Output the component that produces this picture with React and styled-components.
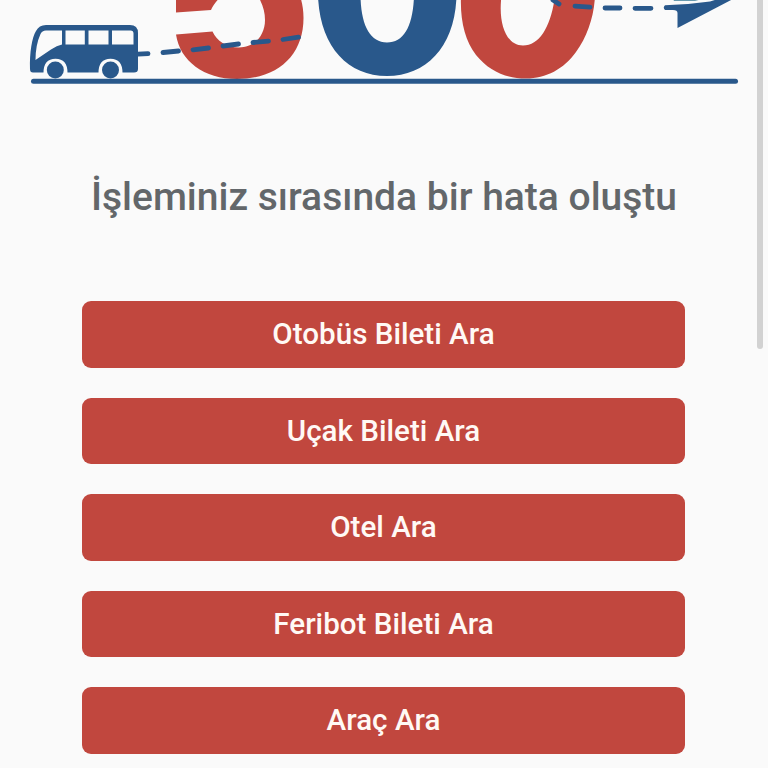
import React from 'react';
import styled, { createGlobalStyle } from 'styled-components';

const BLUE = '#29588b';
const RED = '#c1473e';
const PAPER = '#fafafa';

const GlobalStyle = createGlobalStyle`
  body {
    margin: 0;
    background: ${PAPER};
    font-family: Roboto, "Liberation Sans", sans-serif;
    overflow: hidden;
  }
`;

const Page = styled.main`
  position: relative;
  box-sizing: border-box;
  width: 768px;
  height: 768px;
  overflow: hidden;
  display: flex;
  flex-direction: column;
  align-items: center;
  background: ${PAPER};
`;

const Illustration = styled.svg`
  display: block;
  flex: none;
  width: 768px;
  height: 100px;
`;

const Title = styled.h1`
  margin: 73px 0 0;
  height: 48px;
  line-height: 48px;
  font-size: 39px;
  font-weight: 500;
  color: #63676a;
  white-space: nowrap;
`;

const Actions = styled.nav`
  display: flex;
  flex-direction: column;
  gap: 30px;
  width: 603px;
  margin-top: 80.4px;
  margin-right: 1px;
`;

const ActionButton = styled.button`
  flex: none;
  height: 66.5px;
  padding: 0 0 1px;
  border: 0;
  border-radius: 9px;
  background: ${RED};
  color: #fff9f5;
  font-family: inherit;
  font-size: 29.6px;
  font-weight: 500;
  line-height: 36px;
`;

const ScrollThumb = styled.div`
  position: absolute;
  top: -6px;
  right: 5.5px;
  width: 5.5px;
  height: 354.5px;
  border-radius: 3px;
  background: #d2d2d2;
`;

const ACTIONS = [
  'Otobüs Bileti Ara',
  'Uçak Bileti Ara',
  'Otel Ara',
  'Feribot Bileti Ara',
  'Araç Ara',
];

function ErrorIllustration() {
  return (
    <Illustration viewBox="0 0 768 100" aria-hidden="true">
      <g fill={RED}>
        <path d="M176 -4V12.5L211 10C213 5 217 0 222 -4H258C263 5 265 12 265 20C265 36 254 47.5 239 47.5C226 47.5 217 41 212.5 31.5L176 34.5C180 61 204 79 237 79C278 79 303.5 55 303.5 18C303.5 9 302 2 300 -4Z" />
        <path d="M461 -4C460 21 465 40 476 55C489 71 506 78.5 526 78.5C546 78.5 564 69 576 52C587 37 594 17 595 -4H555C551 26 540 45.5 523 45.5C506 45.5 498 23 501.5 -4Z" />
      </g>
      <path fill={BLUE} d="M318 -4C320 46 347 76 387 76C427 76 455 46 456.5 -4H414C413 26 404 42.5 387 42.5C370 42.5 361 25 360.5 -4Z" />
      <g fill="none" stroke={BLUE} strokeLinecap="round">
        <path d="M33.5 81.3H735.5" strokeWidth="5" />
        <path strokeWidth="4.8" d="M138 54.2L148 53.6M163 52.5L178.5 51M193 49.8L208.5 48M223 46L238.5 44M253 42.5L268.5 41.2M283 39.5L298.5 37.2M553 0L559 4M575 6.2L590 7.2M605 8H620M635 8.3H651" />
      </g>
      <path fill="#689aae" d="M673 -1H702L695 1H674Z" />
      <path fill={BLUE} d="M665 5.2L688 4L710 1.5L718 -1H733L677.5 28V13Q677.5 10 673 10H665Q662.5 7.5 665 5.2Z" />
      <path fill={BLUE} d="M46 25H130Q138 25 138 33V69Q138 72.5 134 72.5H33Q30 72.5 30 69C29.5 53 32 37 36 31Q39 25 46 25Z" />
      <path fill={PAPER} d="M46 30.5H62V44.5Q57 45.5 51 49.5L35.5 60Q35.5 45 40.5 34Q42 30.5 46 30.5ZM65.5 30.5H84.8V44.5H65.5ZM88.5 30.5H108.5V44.5H88.5ZM112 30.5H130.5Q133.5 30.5 133.5 33.5V44.5H112Z" />
      <path fill={PAPER} d="M43.5 73Q43.5 58.8 55.5 58.8T67.5 73ZM98.5 73Q98.5 58.8 110.5 58.8T122.5 73Z" />
      <g fill={BLUE}>
        <circle cx="55.3" cy="70" r="8.5" />
        <circle cx="110.5" cy="70" r="8.5" />
      </g>
    </Illustration>
  );
}

export default function App() {
  return (
    <>
      <GlobalStyle />
      <Page>
        <ErrorIllustration />
        <Title>İşleminiz sırasında bir hata oluştu</Title>
        <Actions>
          {ACTIONS.map((label) => (
            <ActionButton key={label} type="button">{label}</ActionButton>
          ))}
        </Actions>
        <ScrollThumb />
      </Page>
    </>
  );
}
